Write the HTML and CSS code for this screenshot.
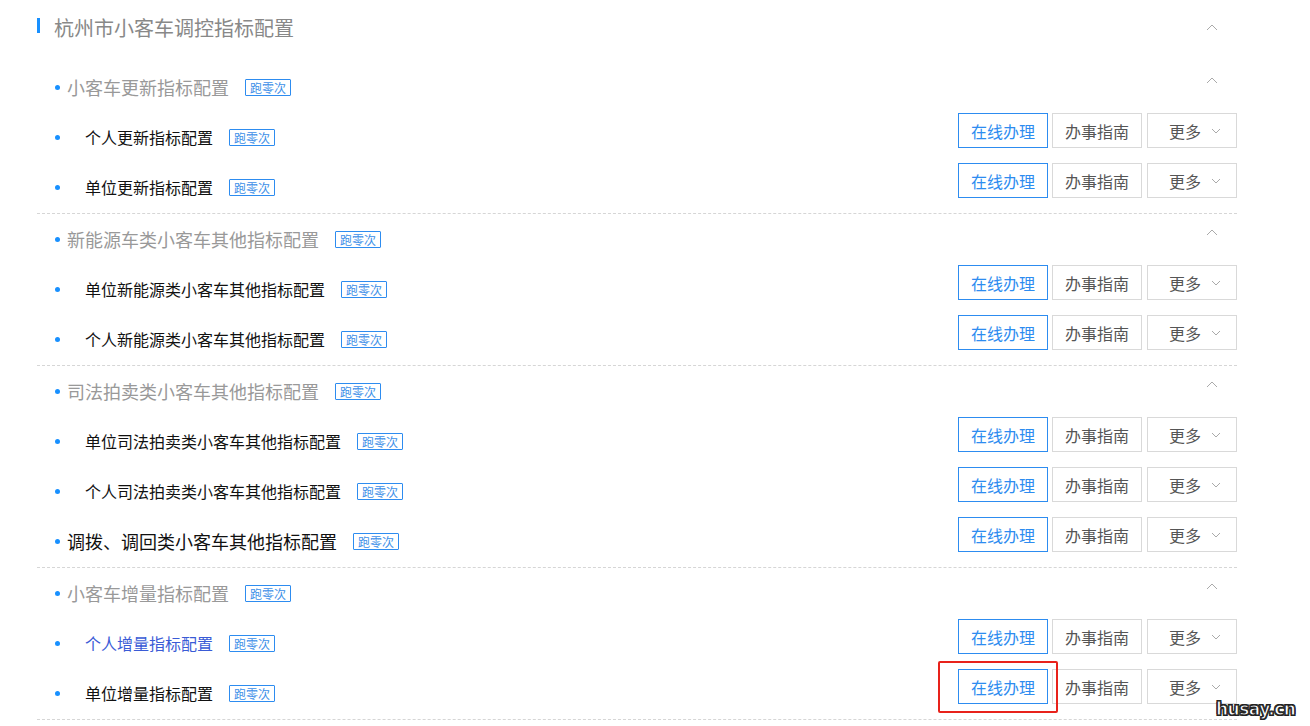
FILE: index.html
```html
<!DOCTYPE html>
<html lang="zh-CN">
  <head>
    <meta charset="UTF-8" />
    <meta name="viewport" content="width=device-width, initial-scale=1.0" />
    <title>杭州市小客车调控指标配置</title>
    <link rel="stylesheet" href="styles.css">
  </head>
  <body>
    <div class="page">
      <div class="title-row">
        <h1 class="title">杭州市小客车调控指标配置</h1>
        <svg class="arrow-up" width="12" height="8" viewBox="0 0 12 8"><polyline points="1,7 6,2 11,7" /></svg>
      </div>

      <div class="group">
        <div class="group-head">
          <span class="dot"></span>
          <span class="group-name">小客车更新指标配置</span>
          <span class="tag">跑零次</span>
          <svg class="arrow-up small" width="12" height="8" viewBox="0 0 12 8"><polyline points="1,7 6,2 11,7" /></svg>
        </div>
        <div class="item">
          <span class="dot"></span>
          <span class="item-name">个人更新指标配置</span>
          <span class="tag">跑零次</span>
          <div class="actions">
            <a class="btn btn-primary">在线办理</a>
            <a class="btn">办事指南</a>
            <a class="btn btn-more">更多 <svg width="10" height="6" viewBox="0 0 10 6"><polyline points="1,1 5,5 9,1" /></svg></a>
          </div>
        </div>
        <div class="item">
          <span class="dot"></span>
          <span class="item-name">单位更新指标配置</span>
          <span class="tag">跑零次</span>
          <div class="actions">
            <a class="btn btn-primary">在线办理</a>
            <a class="btn">办事指南</a>
            <a class="btn btn-more">更多 <svg width="10" height="6" viewBox="0 0 10 6"><polyline points="1,1 5,5 9,1" /></svg></a>
          </div>
        </div>
      </div>

      <div class="group">
        <div class="group-head">
          <span class="dot"></span>
          <span class="group-name">新能源车类小客车其他指标配置</span>
          <span class="tag">跑零次</span>
          <svg class="arrow-up small" width="12" height="8" viewBox="0 0 12 8"><polyline points="1,7 6,2 11,7" /></svg>
        </div>
        <div class="item">
          <span class="dot"></span>
          <span class="item-name">单位新能源类小客车其他指标配置</span>
          <span class="tag">跑零次</span>
          <div class="actions">
            <a class="btn btn-primary">在线办理</a>
            <a class="btn">办事指南</a>
            <a class="btn btn-more">更多 <svg width="10" height="6" viewBox="0 0 10 6"><polyline points="1,1 5,5 9,1" /></svg></a>
          </div>
        </div>
        <div class="item">
          <span class="dot"></span>
          <span class="item-name">个人新能源类小客车其他指标配置</span>
          <span class="tag">跑零次</span>
          <div class="actions">
            <a class="btn btn-primary">在线办理</a>
            <a class="btn">办事指南</a>
            <a class="btn btn-more">更多 <svg width="10" height="6" viewBox="0 0 10 6"><polyline points="1,1 5,5 9,1" /></svg></a>
          </div>
        </div>
      </div>

      <div class="group">
        <div class="group-head">
          <span class="dot"></span>
          <span class="group-name">司法拍卖类小客车其他指标配置</span>
          <span class="tag">跑零次</span>
          <svg class="arrow-up small" width="12" height="8" viewBox="0 0 12 8"><polyline points="1,7 6,2 11,7" /></svg>
        </div>
        <div class="item">
          <span class="dot"></span>
          <span class="item-name">单位司法拍卖类小客车其他指标配置</span>
          <span class="tag">跑零次</span>
          <div class="actions">
            <a class="btn btn-primary">在线办理</a>
            <a class="btn">办事指南</a>
            <a class="btn btn-more">更多 <svg width="10" height="6" viewBox="0 0 10 6"><polyline points="1,1 5,5 9,1" /></svg></a>
          </div>
        </div>
        <div class="item">
          <span class="dot"></span>
          <span class="item-name">个人司法拍卖类小客车其他指标配置</span>
          <span class="tag">跑零次</span>
          <div class="actions">
            <a class="btn btn-primary">在线办理</a>
            <a class="btn">办事指南</a>
            <a class="btn btn-more">更多 <svg width="10" height="6" viewBox="0 0 10 6"><polyline points="1,1 5,5 9,1" /></svg></a>
          </div>
        </div>
        <div class="item item-single">
          <span class="dot"></span>
          <span class="item-name">调拨、调回类小客车其他指标配置</span>
          <span class="tag">跑零次</span>
          <div class="actions">
            <a class="btn btn-primary">在线办理</a>
            <a class="btn">办事指南</a>
            <a class="btn btn-more">更多 <svg width="10" height="6" viewBox="0 0 10 6"><polyline points="1,1 5,5 9,1" /></svg></a>
          </div>
        </div>
      </div>

      <div class="group">
        <div class="group-head">
          <span class="dot"></span>
          <span class="group-name">小客车增量指标配置</span>
          <span class="tag">跑零次</span>
          <svg class="arrow-up small" width="12" height="8" viewBox="0 0 12 8"><polyline points="1,7 6,2 11,7" /></svg>
        </div>
        <div class="item">
          <span class="dot"></span>
          <span class="item-name item-hover">个人增量指标配置</span>
          <span class="tag">跑零次</span>
          <div class="actions">
            <a class="btn btn-primary">在线办理</a>
            <a class="btn">办事指南</a>
            <a class="btn btn-more">更多 <svg width="10" height="6" viewBox="0 0 10 6"><polyline points="1,1 5,5 9,1" /></svg></a>
          </div>
        </div>
        <div class="item">
          <span class="dot"></span>
          <span class="item-name">单位增量指标配置</span>
          <span class="tag">跑零次</span>
          <div class="actions">
            <a class="btn btn-primary marked">在线办理</a>
            <a class="btn">办事指南</a>
            <a class="btn btn-more">更多 <svg width="10" height="6" viewBox="0 0 10 6"><polyline points="1,1 5,5 9,1" /></svg></a>
          </div>
        </div>
      </div>
    </div>

    <div class="watermark">husay.cn</div>
  </body>
</html>
```

FILE: styles.css
```css
body {
  margin: 0;
  padding: 0;
  background: #fff;
  font-family: "Noto Sans CJK SC", "Microsoft YaHei", sans-serif;
  color: #333;
  overflow: hidden;
}

.page {
  width: 1200px;
  margin-left: 37px;
}

.title-row {
  display: flex;
  align-items: center;
  height: 56px;
  margin-bottom: 6px;
}

.title {
  margin: 0;
  font-size: 20px;
  font-weight: normal;
  color: #888;
  line-height: 56px;
  padding-left: 17px;
  position: relative;
}

/* blue mark before the title */
.title::before {
  content: "";
  position: absolute;
  left: 0;
  top: 18px;
  width: 3px;
  height: 15px;
  background: #1890ff;
}

.arrow-up {
  margin-left: auto;
  margin-right: 19px;
  margin-top: -3px;
  fill: none;
  stroke: #aaa;
  stroke-width: 1;
}

.arrow-up.small {
  margin-top: -14px;
}

.group {
  border-bottom: 1px dashed #d6d6d6;
  padding-bottom: 1px;
}

.group-head,
.item {
  display: flex;
  align-items: center;
  height: 50px;
  padding-left: 18px;
}

.dot {
  width: 5px;
  height: 5px;
  border-radius: 50%;
  background: #1890ff;
  flex-shrink: 0;
}

.group-name {
  margin-left: 7px;
  font-size: 18px;
  color: #999;
  margin-top: -1px;
}

.item-name {
  margin-left: 25px;
  font-size: 16px;
  color: #111;
  margin-top: -1px;
}

.item-single .item-name {
  margin-left: 7px;
  font-size: 18px;
}

.item-hover {
  color: #3a5bd6;
}

.tag {
  margin-left: 16px;
  height: 15px;
  line-height: 15px;
  padding: 0 4px;
  font-size: 12px;
  color: #3d8fe8;
  border: 1px solid #2d8cf0;
  border-radius: 1px;
}

.actions {
  margin-left: auto;
  display: flex;
  align-self: flex-start;
  margin-top: 1px;
  gap: 4px;
}

.btn {
  box-sizing: border-box;
  width: 90px;
  height: 35px;
  border: 1px solid #d9d9d9;
  display: flex;
  align-items: center;
  justify-content: center;
  font-size: 16px;
  color: #555;
  cursor: pointer;
}

.btn-primary {
  border-color: #2d8cf0;
  color: #2d8cf0;
}

.btn-more {
  margin-left: 1px;
  gap: 10px;
  padding-left: 6px;
}

.btn-more svg {
  fill: none;
  stroke: #aaa;
  stroke-width: 1;
}

/* red annotation box around the last button */
.marked {
  position: relative;
}

.marked::after {
  content: "";
  position: absolute;
  left: -21px;
  top: -9px;
  width: 116px;
  height: 48px;
  border: 2px solid #e8221b;
  border-radius: 2px;
}

.watermark {
  position: absolute;
  left: 1216px;
  top: 699px;
  font-family: "DejaVu Sans", sans-serif;
  font-size: 17px;
  font-weight: bold;
  color: #fff;
  letter-spacing: -0.5px;
  -webkit-text-stroke: 1px #222;
  text-shadow: 1px 1px 0 #222, -1px 1px 0 #222, 1px -1px 0 #222, -1px -1px 0 #222;
}
```
